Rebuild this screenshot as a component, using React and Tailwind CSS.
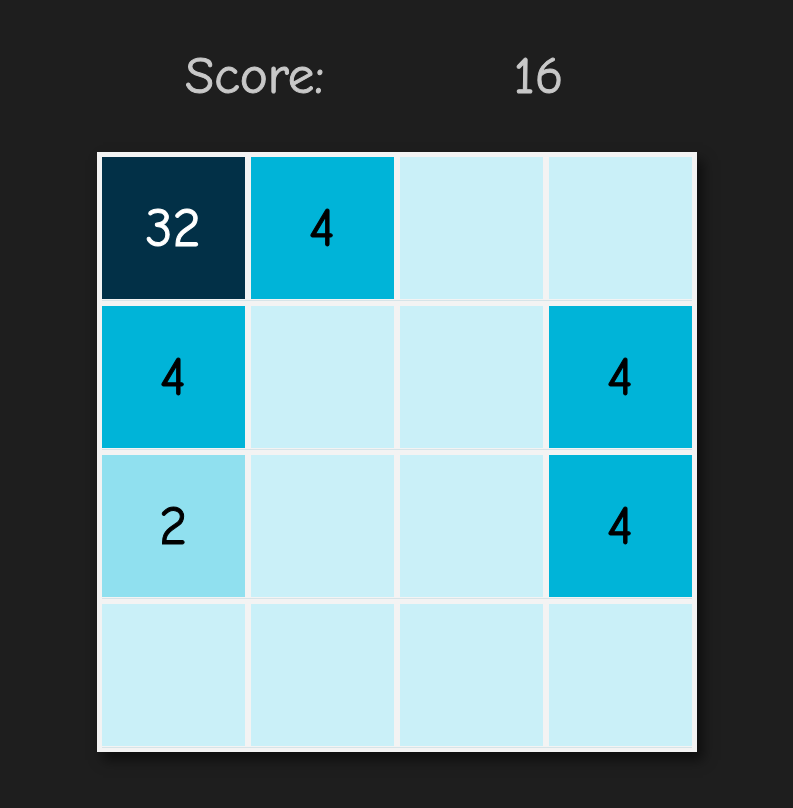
const board = [
  [32, 4, 0, 0],
  [4, 0, 0, 4],
  [2, 0, 0, 4],
  [0, 0, 0, 0],
];

const tileClass = (v) => {
  if (v === 0) return "bg-[#caf0f8]";
  if (v === 2) return "bg-[#90e0ef] text-black";
  if (v === 4) return "bg-[#00b4d8] text-black";
  return "bg-[#023047] text-white";
};

export default function App() {
  return (
    <div
      className="min-h-screen bg-[#1e1e1e] flex flex-col items-center pt-[48px]"
      style={{ fontFamily: '"Comic Sans MS", "Comic Neue", "Noto Sans", sans-serif' }}
    >
      <div className="flex text-[#c8c8c8] text-[53px] leading-[56px] [-webkit-text-stroke:1px_currentColor]">
        <div className="w-[284px] text-center">Score:</div>
        <div className="w-[284px] text-center">16</div>
      </div>

      <div className="mt-[48px] w-[600px] bg-[#f3f3f3] p-[5px] flex flex-col gap-[6px] shadow-[6px_8px_12px_rgba(0,0,0,0.55)]">
        {board.map((row, r) => (
          <div key={r} className="flex gap-[6px] border-b border-[#d6e4e8] pb-px -mb-px">
            {row.map((v, c) => (
              <div
                key={c}
                className={`w-[143px] h-[142px] flex items-center justify-center text-[54px] [-webkit-text-stroke:1px_currentColor] ${tileClass(v)}`}
              >
                {v !== 0 ? v : ""}
              </div>
            ))}
          </div>
        ))}
      </div>
    </div>
  );
}
